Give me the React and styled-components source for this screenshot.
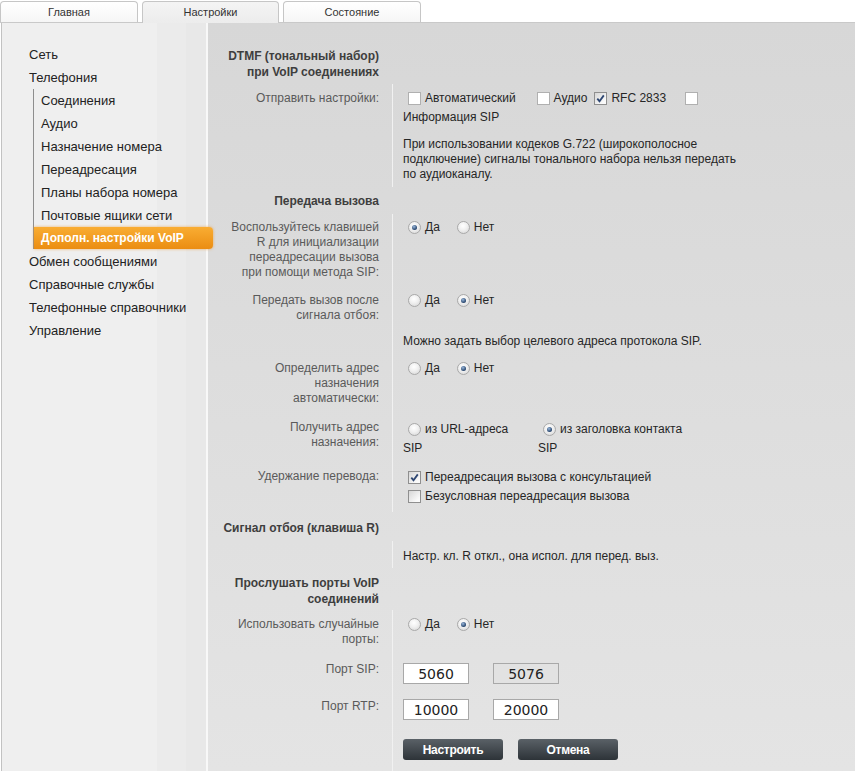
import React from "react";
import styled, { createGlobalStyle } from "styled-components";

const GlobalStyle = createGlobalStyle`
  html, body {
    margin: 0;
    padding: 0;
    background: #fff;
  }
  body {
    font-family: "Liberation Sans", Arial, sans-serif;
  }
`;

const Page = styled.div`
  width: 855px;
  height: 771px;
  display: flex;
  flex-direction: column;
  overflow: hidden;
`;

const TabBar = styled.div`
  display: flex;
  align-items: flex-end;
  gap: 4px;
  height: 22px;
  border-bottom: 1px solid #c9c9c9;
`;

const Tab = styled.div`
  box-sizing: border-box;
  width: ${p => p.$w}px;
  height: ${p => (p.$active ? 22 : 21)}px;
  margin-bottom: ${p => (p.$active ? -1 : 0)}px;
  border: 1px solid #c6c6c6;
  border-bottom: none;
  border-radius: 4px 4px 0 0;
  background: ${p =>
    p.$active
      ? "linear-gradient(#f4f4f4, #ececec)"
      : "linear-gradient(#ffffff, #f6f6f6)"};
  font-size: 11px;
  line-height: 20px;
  text-align: center;
  color: #333;
`;

const Body = styled.div`
  flex: 1;
  display: flex;
  min-height: 0;
`;

const Sidebar = styled.div`
  width: 204px;
  margin-left: 1px;
  border-left: 1px solid #c2c2c2;
  border-right: 2px solid #f8f8f8;
  background: linear-gradient(
    to right,
    #efefef 155px,
    #ebebeb 155px,
    #ebebeb 184px,
    #e8e8e8 184px
  );
  padding-top: 20px;
  position: relative;
  z-index: 1;
`;

const NavItem = styled.div`
  height: 23px;
  line-height: 23px;
  padding-left: 27px;
  font-size: 13px;
  color: #222;
`;

const SubList = styled.div`
  margin-left: 31px;
  border-left: 1px solid #8e8e8e;
`;

const SubItem = styled.div`
  height: 23px;
  line-height: 23px;
  padding-left: 7px;
  font-size: 13px;
  color: #222;
`;

const ActiveItem = styled.div`
  height: 22px;
  line-height: 22px;
  margin: 0 -7px 1px 0;
  padding-left: 7px;
  border-radius: 0 4px 4px 0;
  background: linear-gradient(#f9ad33, #eb8d12);
  box-shadow: 0 0 3px rgba(240, 150, 40, 0.7);
  font-size: 12px;
  font-weight: bold;
  color: #fff;
`;

const Content = styled.div`
  flex: 1;
  background: linear-gradient(#d7d7d7, #e4e4e4);
  font-size: 12px;
  color: #262626;
  overflow: hidden;
`;

const Header = styled.div`
  box-sizing: border-box;
  width: 184px;
  padding-right: 13px;
  margin-top: ${p => p.$mt || 0}px;
  text-align: right;
  font-weight: bold;
  line-height: 16px;
  color: #3e3e3e;
`;

const Group = styled.div`
  display: grid;
  grid-template-columns: 184px 1fr;
  margin-top: ${p => p.$mt || 0}px;
`;

const Label = styled.div`
  padding: ${p => p.$pt || 0}px 13px 0 0;
  text-align: right;
  line-height: 15px;
  color: #5a5a5a;
`;

const Value = styled.div`
  border-left: 1px solid #f1f1f1;
  padding: ${p => p.$pt || 0}px 0 ${p => p.$pb || 0}px 10px;
  line-height: 15px;
`;

const OptLine = styled.div`
  display: flex;
  align-items: center;
  height: ${p => p.$h || 15}px;
  white-space: nowrap;
`;

const Opt = styled.span`
  display: inline-flex;
  align-items: center;
  flex: none;
  width: ${p => (p.$w ? `${p.$w}px` : "auto")};
  margin-right: ${p => p.$mr || 0}px;
`;

const Text = styled.div`
  line-height: ${p => p.$lh || 15}px;
  margin-top: ${p => p.$mt || 0}px;
  white-space: nowrap;
`;

const Box = styled.span`
  display: inline-flex;
  align-items: center;
  justify-content: center;
  box-sizing: border-box;
  width: 13px;
  height: 13px;
  flex: none;
  margin: 0 4px 0 5px;
  border: 1px solid ${p => (p.$plain ? "#b0b0b0" : "#8f8f8f")};
  background: ${p =>
    p.$plain ? "#fff" : "linear-gradient(135deg, #d6d6d6, #fafafa 80%)"};
`;

const RadioDot = styled.span`
  display: inline-flex;
  align-items: center;
  justify-content: center;
  box-sizing: border-box;
  width: 13px;
  height: 13px;
  flex: none;
  margin: 0 4px 0 5px;
  border-radius: 50%;
  border: 1px solid #a9a9a9;
  background: radial-gradient(circle at 45% 35%, #fff 0%, #f0f0f0 45%, #d2d2d2 100%);

  &::after {
    content: "";
    display: ${p => (p.$on ? "block" : "none")};
    width: 5px;
    height: 5px;
    border-radius: 50%;
    background: radial-gradient(circle at 40% 35%, #9ab8dc, #1c3a62 75%);
  }
`;

const Field = styled.input`
  box-sizing: border-box;
  width: 66px;
  height: 21px;
  margin: 0 ${p => p.$mr || 0}px 0 0;
  padding: 0;
  border: 1px solid #a8a8a8;
  background: ${p => (p.$off ? "#e2e2e2" : "#fff")};
  font-family: "DejaVu Sans", Verdana, sans-serif;
  font-size: 14px;
  color: #222;
  text-align: center;
  outline: none;
`;

const Buttons = styled.div`
  display: flex;
  gap: 15px;
`;

const Button = styled.button`
  box-sizing: border-box;
  width: 100px;
  height: 21px;
  padding: 0;
  border: none;
  border-radius: 3px;
  background: linear-gradient(#5a6167, #2d3338);
  font-family: "Liberation Sans", Arial, sans-serif;
  font-size: 12px;
  font-weight: bold;
  letter-spacing: -0.3px;
  color: #fff;
`;

const Check = ({ on, plain }) => (
  <Box $plain={plain}>
    {on && (
      <svg width="9" height="9" viewBox="0 0 9 9">
        <path
          d="M1.3 4.6 L3.5 7.2 L7.8 1.4"
          fill="none"
          stroke="#2d4672"
          strokeWidth="1.8"
        />
      </svg>
    )}
  </Box>
);

const YesNo = ({ yes }) => (
  <OptLine>
    <Opt $mr={12}>
      <RadioDot $on={yes} />
      Да
    </Opt>
    <Opt>
      <RadioDot $on={!yes} />
      Нет
    </Opt>
  </OptLine>
);

const subItems = [
  "Соединения",
  "Аудио",
  "Назначение номера",
  "Переадресация",
  "Планы набора номера",
  "Почтовые ящики сети",
];

const App = () => {
  return (
    <Page>
      <GlobalStyle />
      <TabBar>
        <Tab $w={138}>Главная</Tab>
        <Tab $w={137} $active>
          Настройки
        </Tab>
        <Tab $w={138}>Состояние</Tab>
      </TabBar>

      <Body>
        <Sidebar>
          <NavItem>Сеть</NavItem>
          <NavItem>Телефония</NavItem>
          <SubList>
            {subItems.map(s => (
              <SubItem key={s}>{s}</SubItem>
            ))}
            <ActiveItem>Дополн. настройки VoIP</ActiveItem>
          </SubList>
          <NavItem>Обмен сообщениями</NavItem>
          <NavItem>Справочные службы</NavItem>
          <NavItem>Телефонные справочники</NavItem>
          <NavItem>Управление</NavItem>
        </Sidebar>

        <Content>
          <Header $mt={25}>
            DTMF (тональный набор)
            <br />
            при VoIP соединениях
          </Header>
          <Group $mt={4}>
            <Label $pt={7}>Отправить настройки:</Label>
            <Value $pt={5} $pb={5}>
              <OptLine $h={19}>
                <Opt $mr={16}>
                  <Check plain />
                  Автоматический
                </Opt>
                <Opt $mr={2}>
                  <Check plain />
                  Аудио
                </Opt>
                <Opt $mr={14}>
                  <Check on />
                  RFC 2833
                </Opt>
                <Check plain />
              </OptLine>
              <Text $lh={19}>Информация SIP</Text>
              <Text $mt={10}>
                При использовании кодеков G.722 (широкополосное
                <br />
                подключение) сигналы тонального набора нельзя передать
                <br />
                по аудиоканалу.
              </Text>
            </Value>
          </Group>

          <Header $mt={6}>Передача вызова</Header>
          <Group $mt={5}>
            <Label $pt={6}>
              Воспользуйтесь клавишей
              <br />
              R для инициализации
              <br />
              переадресации вызова
              <br />
              при помощи метода SIP:
            </Label>
            <Value $pt={6}>
              <YesNo yes />
            </Value>

            <Label $pt={13}>
              Передать вызов после
              <br />
              сигнала отбоя:
            </Label>
            <Value $pt={13}>
              <YesNo />
            </Value>

            <Label $pt={11} />
            <Value $pt={11}>Можно задать выбор целевого адреса протокола SIP.</Value>

            <Label $pt={12}>
              Определить адрес
              <br />
              назначения
              <br />
              автоматически:
            </Label>
            <Value $pt={12}>
              <YesNo />
            </Value>

            <Label $pt={14}>
              Получить адрес
              <br />
              назначения:
            </Label>
            <Value $pt={14}>
              <OptLine $h={19}>
                <Opt $w={135}>
                  <RadioDot />
                  из URL-адреса
                </Opt>
                <Opt>
                  <RadioDot $on />
                  из заголовка контакта
                </Opt>
              </OptLine>
              <OptLine $h={19}>
                <Opt $w={135}>SIP</Opt>
                <Opt>SIP</Opt>
              </OptLine>
            </Value>

            <Label $pt={11}>Удержание перевода:</Label>
            <Value $pt={10} $pb={6}>
              <OptLine $h={19}>
                <Check on />
                Переадресация вызова с консультацией
              </OptLine>
              <OptLine $h={19}>
                <Check />
                Безусловная переадресация вызова
              </OptLine>
            </Value>
          </Group>

          <Header $mt={8}>Сигнал отбоя (клавиша R)</Header>
          <Group $mt={5}>
            <Label />
            <Value $pt={8} $pb={4}>
              Настр. кл. R откл., она испол. для перед. выз.
            </Value>
          </Group>

          <Header $mt={7}>
            Прослушать порты VoIP
            <br />
            соединений
          </Header>
          <Group $mt={3}>
            <Label $pt={7}>
              Использовать случайные
              <br />
              порты:
            </Label>
            <Value $pt={7}>
              <YesNo />
            </Value>

            <Label $pt={15}>Порт SIP:</Label>
            <Value $pt={16}>
              <Field $mr={24} defaultValue="5060" readOnly />
              <Field $off defaultValue="5076" readOnly />
            </Value>

            <Label $pt={15}>Порт RTP:</Label>
            <Value $pt={15}>
              <Field $mr={24} defaultValue="10000" readOnly />
              <Field defaultValue="20000" readOnly />
            </Value>

            <Label />
            <Value $pt={19} $pb={40}>
              <Buttons>
                <Button>Настроить</Button>
                <Button>Отмена</Button>
              </Buttons>
            </Value>
          </Group>
        </Content>
      </Body>
    </Page>
  );
};

export default App;
